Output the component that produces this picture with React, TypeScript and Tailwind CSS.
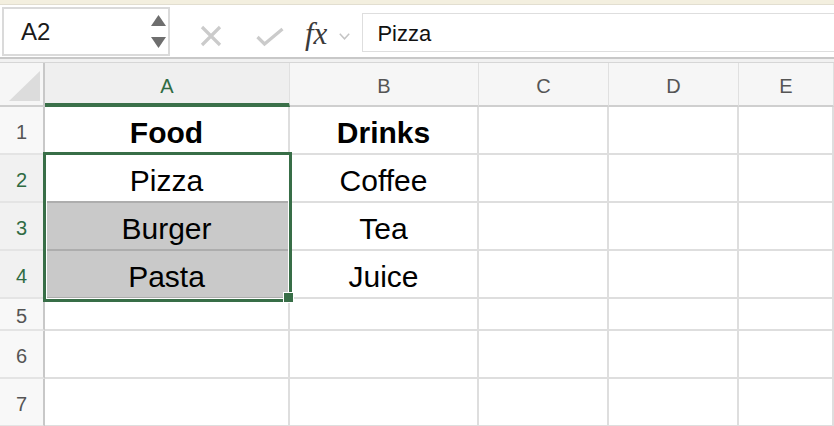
import React from "react";

const cols = ["A", "B", "C", "D", "E"];

type Row = {
  num: number;
  height: string;
  cells: string[];
  bold?: boolean;
};

const rows: Row[] = [
  { num: 1, height: "h-[48px]", cells: ["Food", "Drinks", "", "", ""], bold: true },
  { num: 2, height: "h-[48px]", cells: ["Pizza", "Coffee", "", "", ""] },
  { num: 3, height: "h-[48px]", cells: ["Burger", "Tea", "", "", ""] },
  { num: 4, height: "h-[48px]", cells: ["Pasta", "Juice", "", "", ""] },
  { num: 5, height: "h-[32px]", cells: ["", "", "", "", ""] },
  { num: 6, height: "h-[48px]", cells: ["", "", "", "", ""] },
  { num: 7, height: "h-[48px]", cells: ["", "", "", "", ""] },
];

const Toolbar = () => (
  <div>
    <div className="h-[5px] bg-[#f3efdf] border-b border-[#e2ded0]" />
    <div className="h-[52px] flex items-start bg-white">
      <div className="mt-[2px] ml-[2px] w-[168px] h-[49px] border-2 border-[#dadada] bg-white flex items-center justify-between pl-[17px] pr-[2px]">
        <span className="text-[24px] text-[#1a1a1a] pt-[1px]">A2</span>
        <div className="flex flex-col gap-[11px] items-center">
          <svg width="15" height="11" viewBox="0 0 15 11">
            <polygon points="7.5,0 15,11 0,11" fill="#6e6e6e" />
          </svg>
          <svg width="15" height="11" viewBox="0 0 15 11">
            <polygon points="0,0 15,0 7.5,11" fill="#6e6e6e" />
          </svg>
        </div>
      </div>
      <svg className="ml-[30px] mt-[20px]" width="22" height="22" viewBox="0 0 22 22">
        <path d="M2 2 L20 20 M20 2 L2 20" stroke="#cbcbcb" strokeWidth="3.2" fill="none" />
      </svg>
      <svg className="ml-[34px] mt-[22px]" width="28" height="20" viewBox="0 0 28 20">
        <path d="M1.5 10 L8.5 17 L26.5 2" stroke="#cbcbcb" strokeWidth="3.2" fill="none" />
      </svg>
      <span
        className="ml-[21px] mt-[13px] text-[31px] italic text-[#3a3a3a] leading-none"
        style={{ fontFamily: '"Liberation Serif", "DejaVu Serif", serif' }}
      >
        fx
      </span>
      <svg className="ml-[12px] mt-[28px]" width="11" height="7" viewBox="0 0 11 7">
        <path d="M0.8 0.8 L5.5 5.8 L10.2 0.8" stroke="#c4c4c4" strokeWidth="1.5" fill="none" />
      </svg>
      <div className="ml-[12px] mt-[8px] flex-1 h-[39px] border border-[#dedede] border-r-0 bg-white flex items-center pl-[14px]">
        <span className="text-[22px] text-[#111] pt-[1px]">Pizza</span>
      </div>
    </div>
    <div className="h-[6px] border-t-2 border-[#c8c8c8] bg-[#f1f1f1] border-b border-b-[#d6d6d6]" />
  </div>
);

const Sheet = () => (
  <div className="relative grid grid-cols-[45px_245px_189px_130px_130px_1fr]">
    {/* corner */}
    <div className="h-[44px] bg-[#f6f6f6] border-r-2 border-[#c8c8c8] border-b-2 border-b-[#cfcfcf] flex items-end justify-end pr-[3px] pb-[4px]">
      <svg width="31" height="30" viewBox="0 0 31 30">
        <polygon points="31,0 31,30 0,30" fill="#dcdcdc" />
      </svg>
    </div>
    {cols.map((c) => (
      <div
        key={c}
        className={
          c === "A"
            ? "h-[44px] bg-[#efefef] border-r border-[#e0e0e0] border-b-4 border-b-[#3a7049] flex items-center justify-center pt-[6px] text-[20px] text-[#2f6b43]"
            : "h-[44px] bg-[#f6f6f6] border-r border-[#e0e0e0] border-b-2 border-b-[#cfcfcf] flex items-center justify-center pt-[3px] text-[20px] text-[#555]"
        }
      >
        {c}
      </div>
    ))}
    {rows.map((r) => {
      const sel = r.num >= 2 && r.num <= 4;
      return (
        <React.Fragment key={r.num}>
          <div
            className={
              sel
                ? `${r.height} bg-[#f1f1f1] border-r-2 border-[#c8c8c8] border-b-2 border-b-[#e4e4e4] flex items-center justify-center pt-[4px] text-[20px] text-[#2f6b43]`
                : `${r.height} bg-[#f8f8f8] border-r-2 border-[#c8c8c8] border-b-2 border-b-[#e4e4e4] flex items-center justify-center pt-[4px] text-[20px] text-[#555]`
            }
          >
            {r.num}
          </div>
          {r.cells.map((v, i) => {
            const gray = i === 0 && (r.num === 3 || r.num === 4);
            let cls = `${r.height} border-r-2 border-b-2 flex items-center justify-center pt-[4px] text-[30px] text-black`;
            if (gray) cls += " bg-[#c9c9c9] border-[#adadad]";
            else if (i === 0 && r.num === 2) cls += " bg-white border-r-[#dedede] border-b-[#adadad]";
            else cls += " bg-white border-[#dedede]";
            if (r.bold) cls += " font-bold";
            return (
              <div key={i} className={cls}>
                {v}
              </div>
            );
          })}
        </React.Fragment>
      );
    })}
    {/* selection */}
    <div className="absolute left-[43px] top-[89px] w-[249px] h-[150px] border-[3px] border-[#386e47] shadow-[inset_0_0_0_1px_#ffffff]" />
    <div className="absolute left-[283px] top-[229px] w-[11px] h-[11px] bg-[#386e47] border border-white" />
  </div>
);

export default function App() {
  return (
    <div
      className="w-[834px] h-[426px] overflow-hidden bg-white"
      style={{ fontFamily: '"Liberation Sans", Arial, sans-serif' }}
    >
      <Toolbar />
      <Sheet />
    </div>
  );
}
